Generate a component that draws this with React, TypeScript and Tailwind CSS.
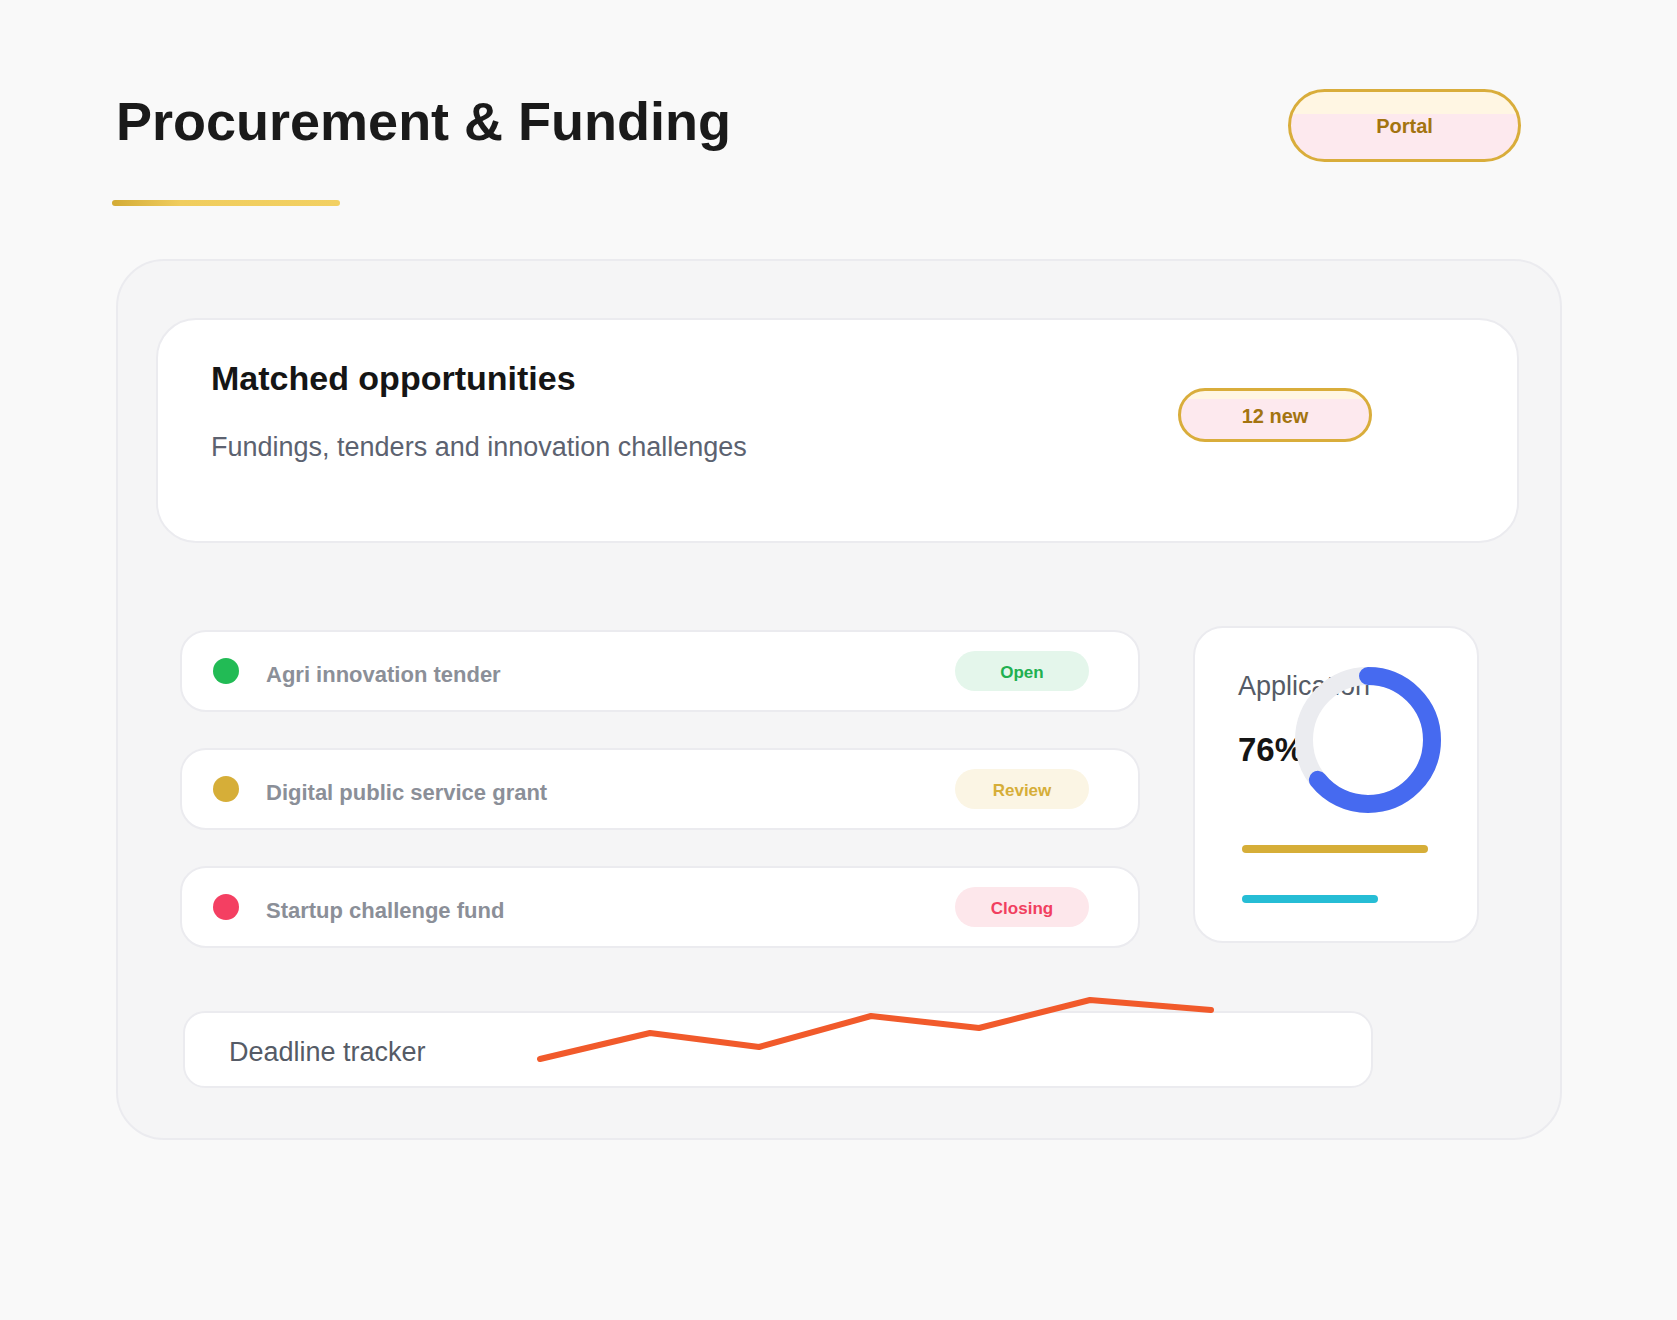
import React from 'react';

const rows = [
  { name: 'Agri innovation tender', dot: 'bg-[#22bb55]', status: 'Open', pill: 'bg-[#e4f6eb] text-[#21b050]' },
  { name: 'Digital public service grant', dot: 'bg-[#d6ae38]', status: 'Review', pill: 'bg-[#fbf5e4] text-[#d6ae38]' },
  { name: 'Startup challenge fund', dot: 'bg-[#f43f62]', status: 'Closing', pill: 'bg-[#fde7eb] text-[#f13f60]' },
];

// donut geometry
const R = 64;
const C = 2 * Math.PI * R;
const progress = 0.642;

export default function App() {
  return (
    <div className="min-h-[1320px] bg-[#f9f9f9] pt-[89px] font-['Liberation_Sans',Arial,sans-serif]">
      {/* Header */}
      <header className="ml-[112px] flex w-[1409px] items-start justify-between">
        <div className="pt-[5px]">
          <h1 className="ml-[4px] text-[54px] font-bold leading-none text-[#1a1a1a]">Procurement &amp; Funding</h1>
          <div className="mt-[52px] h-[6px] w-[228px] rounded-full bg-linear-to-r from-[#d3ab34] via-[#f0cd5e] via-30% to-[#f2d062]" />
        </div>
        <div className="flex h-[73px] w-[233px] items-center justify-center rounded-full border-[3px] border-[#d9ad3b] bg-[linear-gradient(to_bottom,#fff6e3_0,#fff6e3_22px,#fde9ee_22px)] text-[20px] font-bold text-[#a37410]">
          Portal
        </div>
      </header>

      {/* Main panel */}
      <section className="ml-[116px] mt-[53px] h-[881px] w-[1446px] rounded-[48px] border-2 border-[#ebebef] bg-[#f5f5f6] pl-[38px] pt-[57px]">
        <div className="flex h-[225px] w-[1363px] items-start justify-between rounded-[40px] border-2 border-[#ebebef] bg-white pl-[53px] pr-[145px] pt-[41px]">
          <div>
            <h2 className="text-[34px] font-bold leading-none text-[#151515]">Matched opportunities</h2>
            <p className="mt-[39px] text-[27px] leading-none text-[#5c6270]">Fundings, tenders and innovation challenges</p>
          </div>
          <div className="mt-[27px] flex h-[54px] w-[194px] items-center justify-center rounded-full border-[3px] border-[#d9ad3b] bg-[linear-gradient(to_bottom,#fff6e3_0,#fff6e3_8px,#fde9ee_8px)] pt-[2px] text-[20px] font-bold text-[#a37410]">
            12 new
          </div>
        </div>

        <div className="ml-[24px] mt-[83px] flex items-start gap-[53px]">
          {/* Opportunity rows */}
          <div className="mt-[4px] flex w-[960px] flex-col gap-[36px]">
            {rows.map((row) => (
              <div
                key={row.name}
                className="flex h-[82px] items-center rounded-[26px] border-2 border-[#ebebef] bg-white pl-[31px] pr-[49px]"
              >
                <span className={`h-[26px] w-[26px] rounded-full ${row.dot}`} />
                <span className="ml-[27px] pt-[7px] text-[22px] font-bold leading-none text-[#8b8f98]">{row.name}</span>
                <span className={`ml-auto flex h-[40px] w-[134px] items-center justify-center rounded-full pt-[3px] text-[17px] font-bold ${row.pill}`}>
                  {row.status}
                </span>
              </div>
            ))}
          </div>

          {/* Application card */}
          <div className="relative h-[317px] w-[286px] rounded-[30px] border-2 border-[#ebebef] bg-white pl-[43px] pt-[45px]">
            <div className="text-[27px] leading-none text-[#555b66]">Application</div>
            <div className="mt-[33px] text-[33px] font-bold leading-none text-[#151515]">76%</div>
            <div className="ml-[4px] mt-[79px] h-[8px] w-[186px] rounded-full bg-[#d6ae38]" />
            <div className="ml-[4px] mt-[42px] h-[8px] w-[136px] rounded-full bg-[#26bdd5]" />
            <svg className="absolute left-[100px] top-[39px]" width="146" height="146" viewBox="0 0 146 146">
              <circle cx="73" cy="73" r={R} fill="none" stroke="#ebecf0" strokeWidth="18" />
              <circle
                cx="73"
                cy="73"
                r={R}
                fill="none"
                stroke="#466af0"
                strokeWidth="18"
                strokeLinecap="round"
                strokeDasharray={`${C * progress} ${C}`}
                transform="rotate(-90 73 73)"
              />
            </svg>
          </div>
        </div>

        {/* Deadline tracker */}
        <div className="relative ml-[27px] mt-[63px] flex h-[77px] w-[1190px] items-center rounded-[22px] border-2 border-[#ebebef] bg-white pl-[44px]">
          <span className="pt-[5px] text-[27px] leading-none text-[#555b66]">Deadline tracker</span>
          <svg className="absolute left-0 top-[-20px] overflow-visible" width="1186" height="100" viewBox="0 0 1186 100">
            <polyline
              points="355,66 465,40 574,54 686,23 794,35 905,7 1026,17"
              fill="none"
              stroke="#f15a2b"
              strokeWidth="6"
              strokeLinecap="round"
              strokeLinejoin="round"
            />
          </svg>
        </div>
      </section>
    </div>
  );
}
